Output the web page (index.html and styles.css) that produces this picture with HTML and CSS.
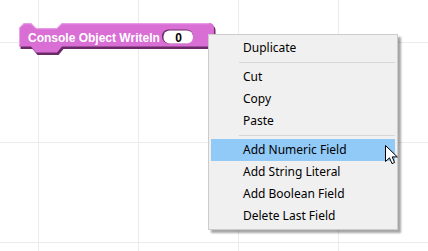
FILE: index.html
```html
<!DOCTYPE html>
<html>
<head>
<meta charset="utf-8">
<link rel="stylesheet" href="styles.css">
</head>
<body>
<div class="workspace">
  <svg class="block" width="200" height="38" viewBox="0 0 200 38">
    <path class="block-shade" transform="translate(1.5,2.5)" d="M0,5 L5,0 L12,0 L17,5 L38,5 L43,0 L190,0 Q195,0 195,5 L195,23.5 L43,23.5 L38,29.5 L17,29.5 L12,23.5 L0,23.5 Z"/>
    <path class="block-fill" d="M0,5 L5,0 L12,0 L17,5 L38,5 L43,0 L190,0 Q195,0 195,5 L195,23.5 L43,23.5 L38,29.5 L17,29.5 L12,23.5 L0,23.5 Z"/>
    <path class="block-hi" d="M0.5,22.5 L0.5,5 L5,0.7 L12,0.7 L17,5.7 L38,5.7 L43,0.7 L190,0.7"/>
    <text class="block-label" x="9" y="19">Console Object Writeln</text>
    <rect class="field-shade" x="143" y="6.5" width="31" height="14" rx="6.5"/>
    <rect class="field" x="144.5" y="7.5" width="29.5" height="13" rx="6"/>
    <text class="field-text" x="159.5" y="18.5">0</text>
  </svg>

  <div class="menu">
    <div class="item">Duplicate</div>
    <div class="sep"></div>
    <div class="item">Cut</div>
    <div class="item">Copy</div>
    <div class="item">Paste</div>
    <div class="sep"></div>
    <div class="item active">Add Numeric Field</div>
    <div class="item">Add String Literal</div>
    <div class="item">Add Boolean Field</div>
    <div class="item">Delete Last Field</div>
  </div>

  <svg class="cursor" width="14" height="21" viewBox="0 0 14 21">
    <path d="M0.5,0.5 L0.5,16.5 L4.5,12.8 L7,18.6 L9.6,17.5 L7.2,11.9 L12.3,11.9 Z" fill="#fff" stroke="#000" stroke-width="1" stroke-linejoin="miter"/>
  </svg>
</div>
</body>
</html>
```

FILE: styles.css
```css
html, body {
  margin: 0;
  padding: 0;
}

body {
  width: 428px;
  height: 251px;
  overflow: hidden;
  background: #ffffff;
}

.workspace {
  position: relative;
  width: 428px;
  height: 251px;
  background-color: #ffffff;
  background-image:
    linear-gradient(to right, #ebebeb 1px, transparent 1px),
    linear-gradient(to bottom, #ebebeb 1px, transparent 1px);
  background-size: 100px 100px;
  background-position: 38px 42px;
}

.block {
  position: absolute;
  left: 19px;
  top: 23px;
  overflow: visible;
}

.block-shade {
  fill: #6a2a67;
}

.block-fill {
  fill: #d96fd5;
}

.block-hi {
  fill: none;
  stroke: #eba3e8;
  stroke-width: 1;
}

.block-label {
  font-family: "Liberation Sans", Arial, sans-serif;
  font-weight: bold;
  font-size: 12px;
  fill: #ffffff;
}

.field-shade {
  fill: #6a2a67;
}

.field {
  fill: #ffffff;
}

.field-text {
  font-family: "Liberation Sans", Arial, sans-serif;
  font-weight: bold;
  font-size: 12px;
  fill: #000000;
  text-anchor: middle;
}

.menu {
  position: absolute;
  left: 208px;
  top: 34px;
  width: 184px;
  padding: 2px;
  background: #f0f0f0;
  border: 1px solid #cccccc;
  box-shadow: 3px 3px 2px rgba(0, 0, 0, 0.35);
  font-family: "Noto Sans", "Open Sans", sans-serif;
  font-size: 12px;
  color: #000000;
}

.item {
  height: 22px;
  line-height: 22px;
  padding-left: 32px;
  white-space: nowrap;
}

.item.active {
  background: #91c9f7;
}

.sep {
  height: 7px;
  display: flex;
  align-items: center;
  padding-left: 28px;
}

.sep::before {
  content: "";
  flex: 1;
  height: 1px;
  background: #d7d7d7;
}

.cursor {
  position: absolute;
  left: 385px;
  top: 145px;
}
```
